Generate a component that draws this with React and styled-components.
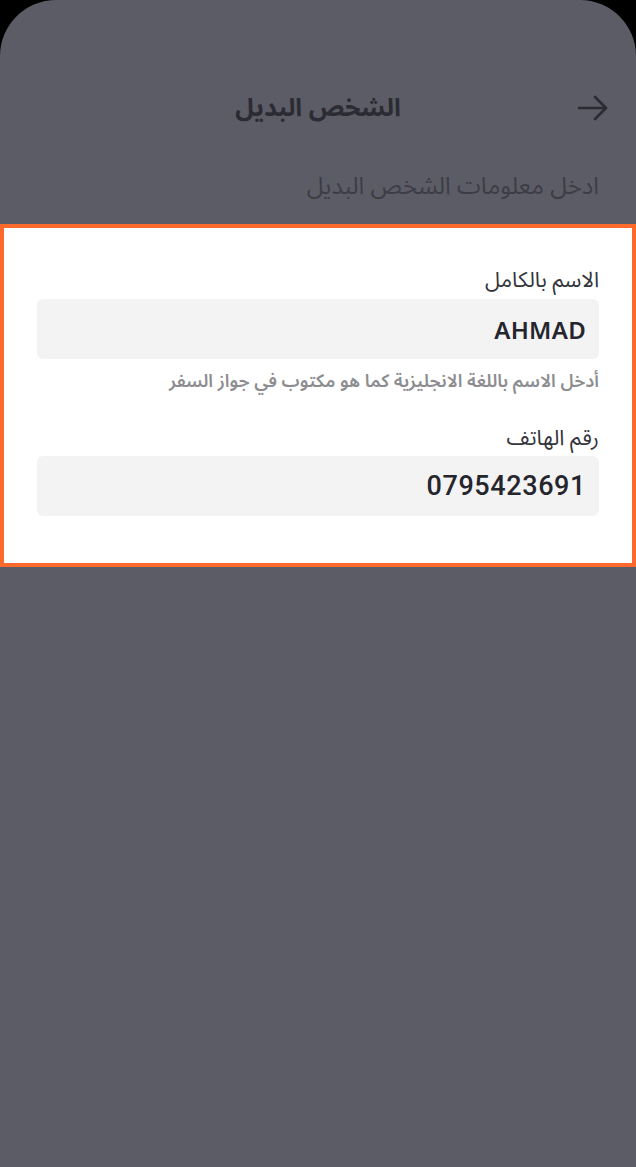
import styled, { createGlobalStyle } from "styled-components"

const GlobalStyle = createGlobalStyle`
  html, body {
    margin: 0;
    padding: 0;
    background: #000;
  }
  * {
    box-sizing: border-box;
  }
`

const arabicFont = `"Noto Sans Arabic", "Noto Sans", "DejaVu Sans", sans-serif`

const Screen = styled.div`
  direction: rtl;
  min-height: 1167px;
  background: #5c5c67;
  border-radius: 56px 56px 0 0;
  padding-top: 82px;
  font-family: ${arabicFont};
`

const Header = styled.header`
  display: grid;
  grid-template-columns: 1fr auto 1fr;
  align-items: center;
  height: 50px;
  padding: 0 27px;
`

const BackButton = styled.button`
  justify-self: start;
  display: flex;
  align-items: center;
  padding: 0;
  border: none;
  background: none;
  color: #2b2b33;
`

const Title = styled.h1`
  margin: 0;
  font-size: 25px;
  font-weight: 700;
  color: #2b2b33;
`

const Subtitle = styled.p`
  margin: 40px 0 0;
  padding: 0 37px;
  font-size: 24px;
  line-height: 30px;
  font-weight: 400;
  color: #3d3d46;
`

const Card = styled.section`
  margin-top: 22px;
  background: #fff;
  border: 4px solid #fe6a2c;
  padding: 39px 33px 47px;
`

const Field = styled.div`
  display: flex;
  flex-direction: column;
  margin-top: ${(p) => (p.$first ? "0" : "32px")};
`

const Label = styled.label`
  font-size: 21.5px;
  line-height: 26px;
  color: #34343c;
  margin-bottom: ${(p) => p.$gap || "6px"};
`

const InputBox = styled.div`
  height: 60px;
  display: flex;
  align-items: center;
  padding: 0 13px;
  background: #f3f3f4;
  border-radius: 6px;
`

const Value = styled.span`
  direction: ltr;
  font-family: ${(p) => (p.$digits ? `"Roboto", "Noto Sans", sans-serif` : `"Noto Sans", "Roboto", sans-serif`)};
  font-size: ${(p) => (p.$digits ? "27px" : "24px")};
  font-weight: ${(p) => (p.$digits ? 500 : 600)};
  letter-spacing: ${(p) => (p.$digits ? "0.6px" : "0.3px")};
  color: #25252d;
`

const Hint = styled.p`
  margin: 10px 0 0;
  font-size: 18px;
  line-height: 24px;
  font-weight: 600;
  color: #8d8d91;
`

function ArrowRight() {
  return (
    <svg width="32" height="26" viewBox="0 0 32 26" fill="none" stroke="currentColor" strokeWidth="2.6" strokeLinecap="round" strokeLinejoin="round">
      <path d="M2 13 H29" />
      <path d="M18 2 L29 13 L18 24" />
    </svg>
  )
}

export default function App() {
  return (
    <>
      <GlobalStyle />
      <Screen>
        <Header>
          <BackButton aria-label="رجوع">
            <ArrowRight />
          </BackButton>
          <Title>الشخص البديل</Title>
          <span />
        </Header>
        <Subtitle>ادخل معلومات الشخص البديل</Subtitle>
        <Card>
          <Field $first>
            <Label>الاسم بالكامل</Label>
            <InputBox>
              <Value>AHMAD</Value>
            </InputBox>
            <Hint>أدخل الاسم باللغة الانجليزية كما هو مكتوب في جواز السفر</Hint>
          </Field>
          <Field>
            <Label $gap="5px">رقم الهاتف</Label>
            <InputBox>
              <Value $digits>0795423691</Value>
            </InputBox>
          </Field>
        </Card>
      </Screen>
    </>
  )
}
